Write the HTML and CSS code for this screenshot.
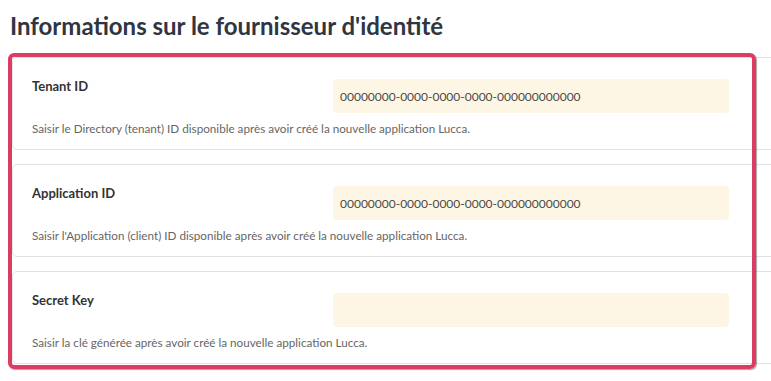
FILE: index.html
```html
<!DOCTYPE html>
<html lang="fr">
<head>
  <meta charset="UTF-8">
  <meta name="viewport" content="width=device-width, initial-scale=1.0">
  <title>Fournisseur d'identité</title>
  <link rel="stylesheet" href="styles.css">
</head>
<body>
  <div class="page">
    <h1 class="title">Informations sur le fournisseur d'identité</h1>
    <div class="fields">
      <div class="field-card">
        <label class="field-label" for="tenant-id">Tenant ID</label>
        <input class="field-input" id="tenant-id" type="text" value="00000000-0000-0000-0000-000000000000">
        <p class="field-help">Saisir le Directory (tenant) ID disponible après avoir créé la nouvelle application Lucca.</p>
      </div>
      <div class="field-card">
        <label class="field-label" for="application-id">Application ID</label>
        <input class="field-input" id="application-id" type="text" value="00000000-0000-0000-0000-000000000000">
        <p class="field-help">Saisir l'Application (client) ID disponible après avoir créé la nouvelle application Lucca.</p>
      </div>
      <div class="field-card">
        <label class="field-label" for="secret-key">Secret Key</label>
        <input class="field-input" id="secret-key" type="text" value="">
        <p class="field-help">Saisir la clé générée après avoir créé la nouvelle application Lucca.</p>
      </div>
      <div class="highlight"></div>
    </div>
  </div>
</body>
</html>
```

FILE: styles.css
```css
body {
  margin: 0;
  background-color: #fff;
  font-family: Lato, "Noto Sans", sans-serif;
  color: #333;
}
.page {
  height: 381px;
  padding-left: 10px;
  overflow: hidden;
}
.title {
  margin: 0;
  padding-top: 11px;
  height: 42px;
  font-size: 24px;
  font-weight: 700;
  line-height: 30px;
  color: #2f3542;
}
.fields {
  position: relative;
  width: 800px;
  padding: 4px 0 0 2px;
}
.field-card {
  display: grid;
  grid-template-columns: 301px 396px;
  align-items: start;
  margin-bottom: 14px;
  padding: 21px 20px 13px 19px;
  background-color: #fff;
  border: 1px solid #e1e1e7;
  border-radius: 5px;
}
.field-label {
  font-size: 13px;
  font-weight: 700;
  line-height: 14px;
  color: #333;
}
.field-input {
  box-sizing: border-box;
  height: 34px;
  padding: 0 7px;
  font-family: Lato, "Noto Sans", sans-serif;
  font-size: 12px;
  color: #4a4a4a;
  background-color: #fef6e4;
  border: none;
  border-radius: 4px;
  outline: none;
}
.field-help {
  grid-column: 1 / 3;
  margin: 7px 0 0;
  font-size: 11.7px;
  line-height: 16px;
  color: #666;
}
.highlight {
  position: absolute;
  left: -2px;
  top: 0;
  width: 740px;
  height: 308px;
  border: 4px solid #dc3c62;
  border-radius: 6px;
  box-shadow: 1px 1px 1px rgba(0, 0, 0, 0.35);
  pointer-events: none;
}
```
